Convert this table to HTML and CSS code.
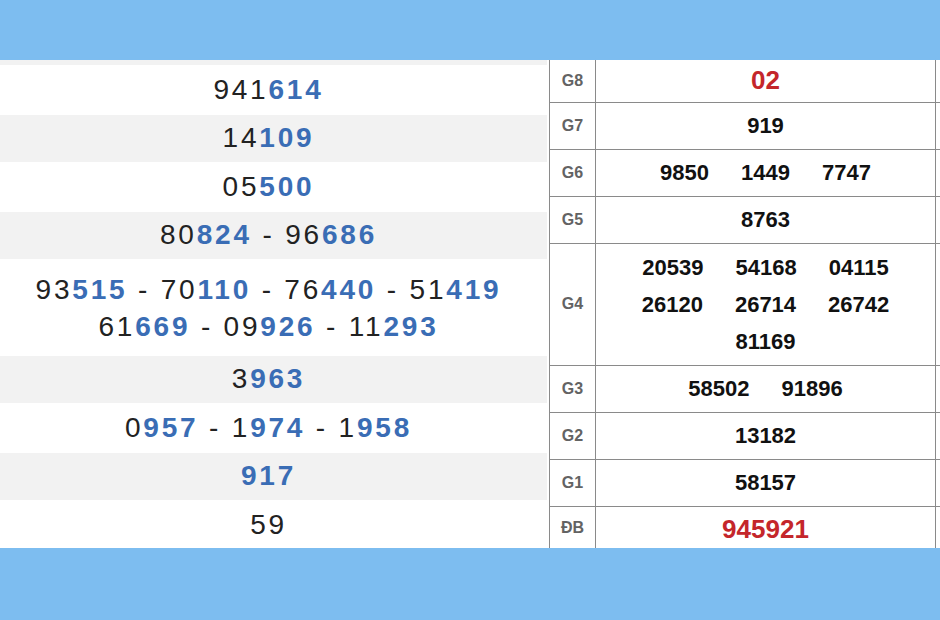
FILE: index.html
```html
<!DOCTYPE html>
<html>
<head>
<meta charset="utf-8">
<link rel="stylesheet" href="styles.css">
</head>
<body>
<div class="page">
  <div class="band"></div>
  <div class="content">
    <div class="left">
      <div class="lrow alt stub"></div>
      <div class="lrow">941<b>614</b></div>
      <div class="lrow alt">14<b>109</b></div>
      <div class="lrow">05<b>500</b></div>
      <div class="lrow alt">80<b>824</b> - 96<b>686</b></div>
      <div class="lrow tall">93<b>515</b> - 70<b>110</b> - 76<b>440</b> - 51<b>419</b><br>61<b>669</b> - 09<b>926</b> - 11<b>293</b></div>
      <div class="lrow alt">3<b>963</b></div>
      <div class="lrow">0<b>957</b> - 1<b>974</b> - 1<b>958</b></div>
      <div class="lrow alt"><b>917</b></div>
      <div class="lrow">59</div>
    </div>
    <div class="right">
      <table class="kq">
        <tr class="first"><th>G8</th><td class="val"><span class="red">02</span></td><td class="edge"></td></tr>
        <tr><th>G7</th><td class="val">919</td><td class="edge"></td></tr>
        <tr><th>G6</th><td class="val"><div class="nums"><span>9850</span><span>1449</span><span>7747</span></div></td><td class="edge"></td></tr>
        <tr><th>G5</th><td class="val">8763</td><td class="edge"></td></tr>
        <tr class="g4"><th>G4</th><td class="val"><div class="nums wrap"><span>20539</span><span>54168</span><span>04115</span><span>26120</span><span>26714</span><span>26742</span><span>81169</span></div></td><td class="edge"></td></tr>
        <tr><th>G3</th><td class="val"><div class="nums"><span>58502</span><span>91896</span></div></td><td class="edge"></td></tr>
        <tr><th>G2</th><td class="val">13182</td><td class="edge"></td></tr>
        <tr><th>G1</th><td class="val">58157</td><td class="edge"></td></tr>
        <tr class="last"><th>ĐB</th><td class="val"><span class="red">945921</span></td><td class="edge"></td></tr>
      </table>
    </div>
  </div>
  <div class="band"></div>
</div>
</body>
</html>
```

FILE: styles.css
```css
* { box-sizing: border-box; }
html, body { margin: 0; padding: 0; }
body {
  background: #7dbdf0;
  font-family: "Liberation Sans", Arial, sans-serif;
}
.page {
  width: 940px;
  height: 620px;
  display: flex;
  flex-direction: column;
}
.band {
  height: 60px;
  flex: 0 0 auto;
  background: #7dbdf0;
}
.band:last-child { flex: 1 1 auto; }
.content {
  height: 488px;
  flex: 0 0 488px;
  display: flex;
  overflow: hidden;
  background: #ffffff;
}
.left {
  width: 547px;
  flex: 0 0 547px;
  display: flex;
  flex-direction: column;
}
.lrow {
  flex: none;
  text-align: center;
  font-size: 28px;
  letter-spacing: 2.8px;
  line-height: 36px;
  color: #222222;
  padding: 7px 10px 7px 0;
  background: #ffffff;
}
.lrow.alt {
  background: #f2f2f2;
  padding-top: 5px;
  padding-bottom: 6px;
}
.lrow.stub {
  height: 5px;
  padding: 0;
}
.lrow.tall {
  line-height: 37px;
  padding-top: 12px;
  padding-bottom: 11px;
}
.lrow b {
  color: #3a6db5;
  font-weight: bold;
}
.right {
  flex: 1 1 auto;
  padding-left: 2px;
  background: #ffffff;
}
.kq {
  border-collapse: collapse;
  table-layout: fixed;
  width: 391px;
}
.kq th, .kq td {
  border: 1px solid #8a8a8a;
  padding: 0;
  text-align: center;
  vertical-align: middle;
}
.kq th {
  width: 46px;
  height: 47px;
  font-size: 16px;
  font-weight: bold;
  color: #636363;
}
.kq td.val {
  width: 340px;
  font-size: 22px;
  font-weight: bold;
  color: #111111;
}
.kq td.edge {
  width: 5px;
  border-right: none;
}
.kq tr.first th, .kq tr.first td {
  border-top: none;
  height: 42px;
}
.kq tr.g4 th { height: 122px; }
.kq tr.last th, .kq tr.last td {
  border-bottom: none;
  height: 44px;
}
.kq tr.last td.val { padding-top: 3px; }
.red {
  color: #c4262b;
  font-size: 26px;
}
.nums {
  display: flex;
  justify-content: center;
  column-gap: 32px;
}
.nums.wrap {
  flex-wrap: wrap;
  max-width: 290px;
  margin: 0 auto;
  line-height: 37px;
}
```
